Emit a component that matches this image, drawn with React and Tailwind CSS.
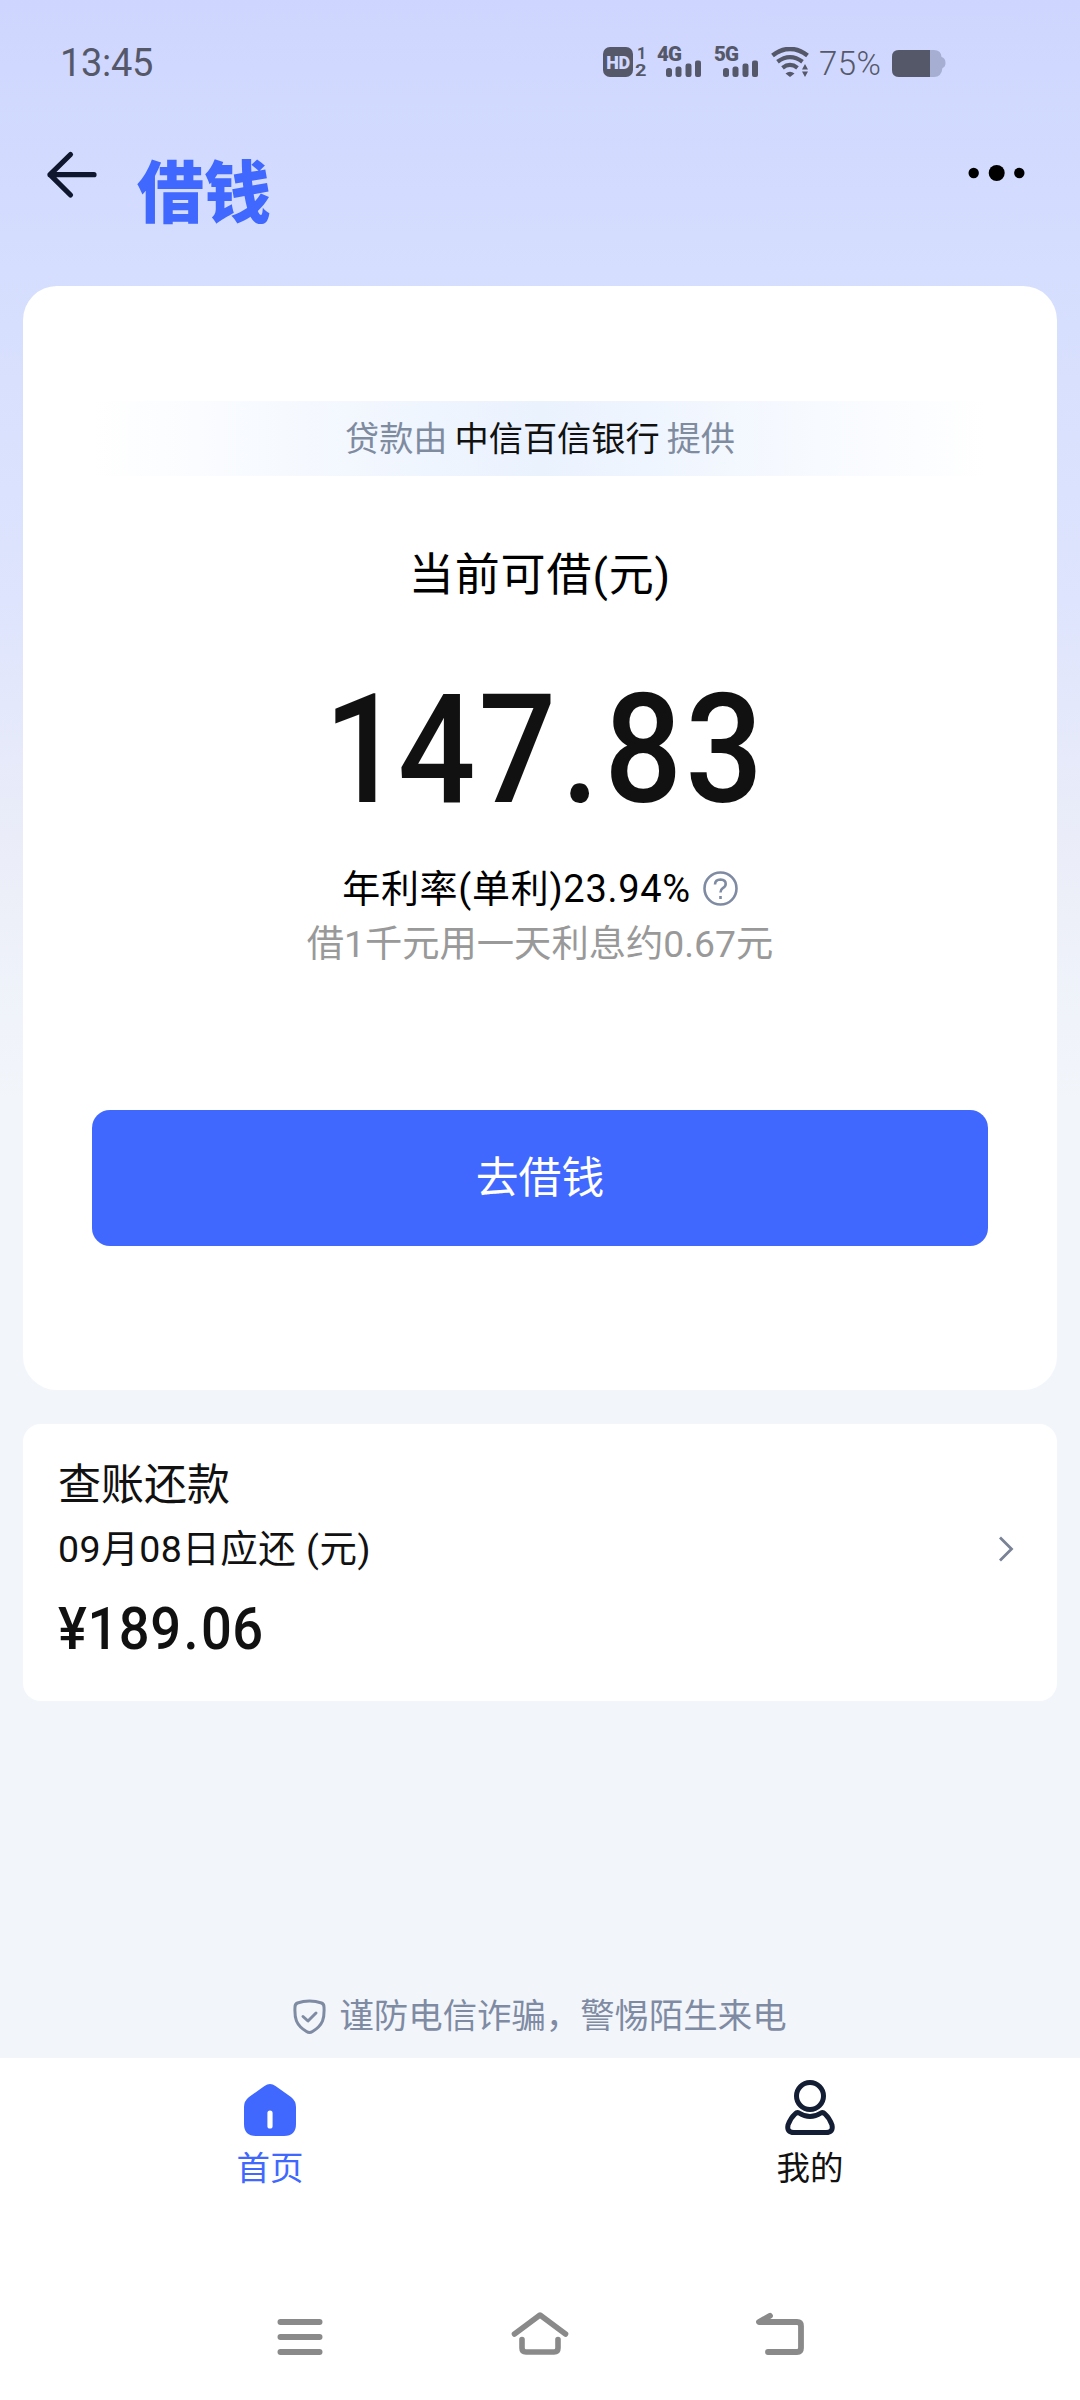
import React from 'react';

const SignalBars = () => (
  <svg className="w-[36px] h-[17px]" viewBox="0 0 36 17" fill="#555869">
    <rect x="0" y="8" width="6" height="9" rx="2.5" />
    <rect x="9.5" y="6.5" width="6" height="10.5" rx="2.5" />
    <rect x="19.5" y="3.5" width="6" height="13.5" rx="2.2" />
    <rect x="29" y="0.5" width="6" height="16.5" rx="2" />
  </svg>
);

const Signal = ({ label }) => (
  <div className="w-[45px] h-[30px]">
    <div className="h-[13px] text-[20.5px] leading-[15px] font-black tracking-[-1px]">{label}</div>
    <div className="pl-[9px]"><SignalBars /></div>
  </div>
);

const StatusBar = () => (
  <div className="h-[124px] pl-[60px] pr-[134px] flex justify-between text-[#555869]">
    <div className="mt-[42px] text-[38px] leading-[42px] tracking-[-0.3px]">13:45</div>
    <div className="mt-[47px] h-[30px] flex">
      <div className="w-[30px] h-[30px] rounded-[7px] bg-[#555869] text-[#d0d8ff] text-[18px] leading-[31px] font-black text-center tracking-[-0.5px]">HD</div>
      <div className="w-[24px] pl-[2px] flex flex-col justify-between text-[16px] leading-[13px] font-bold">
        <span className="pl-[2px]">1</span>
        <span className="scale-x-125 origin-left">2</span>
      </div>
      <div className="w-[57px]"><Signal label="4G" /></div>
      <div className="w-[57px]"><Signal label="5G" /></div>
      <svg className="w-[38px] h-[30px]" viewBox="0 0 38 30" fill="none" stroke="#555869">
        <path d="M1.5 8.5 Q19 -4.5 36.5 8.5" strokeWidth="4.6" />
        <path d="M6.5 14.8 Q19 5.5 31.5 14.8" strokeWidth="4.3" />
        <path d="M11.5 20.8 Q19 15 26.5 20.8" strokeWidth="4.2" />
        <path d="M14.5 26.5 Q19 22.8 23.5 26.5 L19 30 Z" fill="#555869" stroke="none" />
        <path d="M31 22.5 L34 17 L37 22.5 Z M31 24.5 L34 30 L37 24.5 Z" fill="#555869" stroke="none" />
      </svg>
      <div className="w-[82px] pl-[10px] text-[33px] leading-[34px] font-light tracking-[0.4px]">75%</div>
      <svg className="w-[55px] h-[30px]" viewBox="0 0 55 30">
        <path d="M8 3 H43 Q50 3 50.5 10 Q54.5 11 54.5 16 Q54.5 20 51.5 21 Q50.5 30 43 30 H8 Q1 30 1 23 V10 Q1 3 8 3 Z" fill="#a6aed2" />
        <path d="M8 3 H39 V30 H8 Q1 30 1 23 V10 Q1 3 8 3 Z" fill="#555869" />
      </svg>
    </div>
  </div>
);

const Header = () => (
  <div className="h-[162px] flex items-start">
    <svg className="ml-[46px] mt-[26px] w-[52px] h-[50px]" viewBox="0 0 52 50" fill="none" stroke="#0f172e" strokeWidth="5.2" strokeLinecap="round" strokeLinejoin="round">
      <path d="M48 24.7 H4 M24.5 4.5 L4 24.7 L24.5 45" />
    </svg>
    <h1 className="ml-[39px] mt-[22px] text-[67px] leading-[96px] font-black text-[#4068ff]">借钱</h1>
    <svg className="ml-auto mr-[54px] mt-[39px] w-[60px] h-[20px]" viewBox="0 0 60 20">
      <circle cx="7.7" cy="10" r="5.2" />
      <circle cx="30.7" cy="10" r="8" />
      <circle cx="53.3" cy="10" r="5.2" />
    </svg>
  </div>
);

const LoanCard = () => (
  <div className="mx-[23px] h-[1104px] rounded-[34px] bg-white pt-[115px] flex flex-col items-center">
    <div className="w-[894px] h-[75px] pt-[2px] flex items-center justify-center gap-[7px] text-[34.2px] text-[#7f8b9f] bg-linear-to-r from-white via-[#eaf2fe] to-white">
      <span>贷款由</span>
      <span className="text-[#111]">中信百信银行</span>
      <span>提供</span>
    </div>
    <div className="mt-[68px] h-[65px] text-[45px] leading-[64px] tracking-[0.9px] text-black">当前可借(元)</div>
    <div className="mt-[52px] h-[178px] text-[152px] leading-[178px] font-medium text-[#111] tracking-[3.5px] scale-x-[0.9]">
      <span className="ml-[12px] mr-[-8px]">1</span>47<span className="mx-[2px]">.</span>83
    </div>
    <div className="mt-[22px] h-[55px] flex items-center gap-[12px] text-[38px] text-black">
      <span className="pt-[2px] tracking-[0.7px]">年利率(单利)23.94%</span>
      <svg className="w-[35px] h-[35px]" viewBox="0 0 35 35" fill="none" stroke="#7f8ba3" strokeWidth="2.6">
        <circle cx="17.5" cy="17.5" r="16" />
        <path d="M12 13.5 Q12.2 8.5 17.5 8.5 Q22.7 8.7 22.7 13 Q22.7 15.5 19.5 17.3 Q17.5 18.5 17.5 21.5" />
        <path d="M17.5 25 V28" />
      </svg>
    </div>
    <div className="pt-[1px] h-[56px] text-[37.3px] leading-[55px] text-[#999]">借1千元用一天利息约0.67元</div>
    <button className="mt-[138px] w-[896px] h-[136px] rounded-[18px] bg-[#4068ff] text-[42.8px] text-white">去借钱</button>
  </div>
);

const RepayCard = () => (
  <div className="mx-[23px] mt-[34px] h-[277px] rounded-[18px] bg-white pl-[35px] pr-[43px] flex items-center justify-between text-[#111]">
    <div className="pt-[4px]">
      <div className="h-[60px] text-[43px] leading-[60px]">查账还款</div>
      <div className="h-[68px] text-[37.5px] leading-[68px] tracking-[0.5px]">09月08日应还 (元)</div>
      <div className="h-[92px] text-[59px] leading-[92px] font-medium tracking-[0.6px] scale-x-[0.92] origin-left">
        ¥189<span className="mx-[2px]">.</span>06
      </div>
    </div>
    <svg className="mb-[27px] w-[16px] h-[28px]" viewBox="0 0 16 28" fill="none" stroke="#7a8296" strokeWidth="2.8">
      <path d="M2 2.5 L13.5 14 L2 25.5" />
    </svg>
  </div>
);

const Notice = () => (
  <div className="mt-auto h-[84px] flex justify-center gap-[13px] text-[#7f8ba3] text-[34.4px] leading-[84px]">
    <svg className="mt-[25px] w-[33px] h-[36px]" viewBox="0 0 33 36" fill="none" stroke="#7f8ba3" strokeWidth="3" strokeLinecap="round" strokeLinejoin="round">
      <path d="M16.5 2 Q23 2 28.5 4 Q31 5 31 8 Q31.5 17 29.5 22 Q27 28 19.5 32.5 Q16.5 34.5 13.5 32.5 Q6 28 3.5 22 Q1.5 17 2 8 Q2 5 4.5 4 Q10 2 16.5 2 Z" />
      <path d="M10 17.5 L15 22 L23 14" />
    </svg>
    <span>谨防电信诈骗，警惕陌生来电</span>
  </div>
);

const TabBar = () => (
  <div className="h-[222px] bg-white grid grid-cols-2 text-[33.5px] leading-[48px]">
    <div className="pt-[21px] flex flex-col items-center text-[#4068ff]">
      <svg className="w-[56px] h-[60px]" viewBox="0 0 56 60">
        <path d="M22.5 7 Q28 3 33.5 7 L49 18 Q54 22 54 28 V45 Q54 57 42 57 H14 Q2 57 2 45 V28 Q2 22 7 18 Z" fill="#4068ff" />
        <path d="M28 34 V47" stroke="white" strokeWidth="5.2" strokeLinecap="round" />
      </svg>
      <span className="mt-[6px]">首页</span>
    </div>
    <div className="pt-[21px] flex flex-col items-center text-[#111]">
      <svg className="w-[56px] h-[60px]" viewBox="0 0 56 60" fill="none" stroke="#131d33" strokeWidth="5" strokeLinejoin="round">
        <circle cx="28" cy="17" r="13.5" />
        <path d="M17 34 Q28 41 39 34 Q41 33 43 35 Q47.5 39 50 46 Q51.5 53.5 44 53.5 H12 Q4.5 53.5 6 46 Q8.5 39 13 35 Q15 33 17 34 Z" />
      </svg>
      <span className="mt-[6px]">我的</span>
    </div>
  </div>
);

const NavBar = () => (
  <div className="h-[120px] bg-white px-[270px] pt-[30px] flex justify-between">
    <svg className="w-[60px] h-[50px]" viewBox="0 0 60 50" fill="none" stroke="#8a8a8a" strokeWidth="6" strokeLinecap="round">
      <path d="M10.5 12 H49.5 M10.5 27 H49.5 M10.5 42 H49.5" />
    </svg>
    <svg className="w-[60px] h-[50px]" viewBox="0 0 60 50" fill="none" stroke="#8a8a8a" strokeWidth="5.6" strokeLinecap="round" strokeLinejoin="round">
      <path d="M4.5 24 L30 5 L55.5 24 M12 29.5 V38 Q12 42 16 42 H44 Q48 42 48 38 V29.5" />
    </svg>
    <svg className="w-[60px] h-[50px]" viewBox="0 0 60 50" fill="none" stroke="#8a8a8a" strokeWidth="5.8" strokeLinecap="round" strokeLinejoin="round">
      <path d="M20 5.8 L9 12 H47 Q51 12 51 16 V38 Q51 42 47 42 H18" />
    </svg>
  </div>
);

export default function App() {
  return (
    <div className="w-[1080px] h-[2400px] flex flex-col bg-[#f2f6fb] bg-[linear-gradient(180deg,#ced6ff_0px,#d5defe_270px,#dee4fd_600px,#ebeef8_860px,#f2f6fb_1100px)] font-['Roboto','Noto_Sans_CJK_SC',sans-serif]">
      <StatusBar />
      <Header />
      <LoanCard />
      <RepayCard />
      <Notice />
      <TabBar />
      <NavBar />
    </div>
  );
}
